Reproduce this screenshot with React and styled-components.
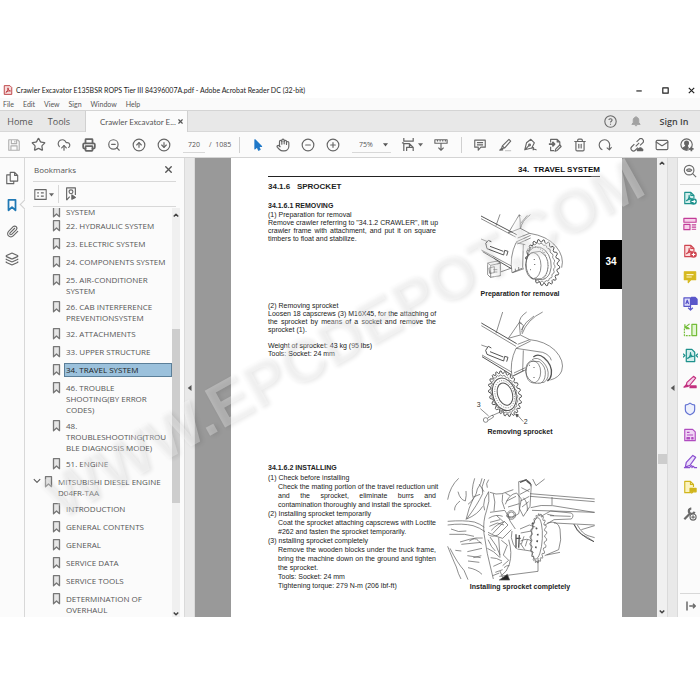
import React from "react";

import styled, { createGlobalStyle, css } from "styled-components";
import {
  Star,
  CloudUpload,
  Printer,
  ZoomOut,
  CircleArrowUp,
  CircleArrowDown,
  CircleMinus,
  CirclePlus,
  Hand,
  Trash2,
  Mail,
  Paperclip,
  Layers,
  Shield,
  X,
} from "lucide-react";

const bookmarks = [
  { lines: ["SYSTEM"] },
  { lines: ["22. HYDRAULIC SYSTEM"] },
  { lines: ["23. ELECTRIC SYSTEM"] },
  { lines: ["24. COMPONENTS SYSTEM"] },
  { lines: ["25. AIR-CONDITIONER", "SYSTEM"] },
  { lines: ["26. CAB INTERFERENCE", "PREVENTIONSYSTEM"] },
  { lines: ["32. ATTACHMENTS"] },
  { lines: ["33. UPPER STRUCTURE"] },
  { lines: ["34. TRAVEL SYSTEM"], active: true },
  { lines: ["46. TROUBLE", "SHOOTING(BY ERROR", "CODES)"] },
  { lines: ["48.", "TROUBLESHOOTING(TROU", "BLE DIAGNOSIS MODE)"] },
  { lines: ["51. ENGINE"] },
  { lines: ["MITSUBISHI DIESEL ENGINE", "D04FR-TAA"], parent: true },
  { lines: ["INTRODUCTION"] },
  { lines: ["GENERAL CONTENTS"] },
  { lines: ["GENERAL"] },
  { lines: ["SERVICE DATA"] },
  { lines: ["SERVICE TOOLS"] },
  { lines: ["DETERMINATION OF", "OVERHAUL"] },
];

const App = () => {
  return (
    <>
      <GlobalStyle />
      <Window>
        <TitleBar>
          <PdfLogo />
          <Title>
            Crawler Excavator E135BSR ROPS Tier III 84396007A.pdf - Adobe
            Acrobat Reader DC (32-bit)
          </Title>
          <WindowButton aria-label="Minimize">
            <Glyph viewBox="0 0 10 10" $size={9}>
              <path d="M1.5 5.5h6" />
            </Glyph>
          </WindowButton>
          <WindowButton aria-label="Maximize">
            <Glyph viewBox="0 0 10 10" $size={9}>
              <path d="M2 2h6v6H2z" />
            </Glyph>
          </WindowButton>
          <WindowButton aria-label="Close">
            <Glyph viewBox="0 0 10 10" $size={9}>
              <path d="M2 2l6 6M8 2L2 8" />
            </Glyph>
          </WindowButton>
        </TitleBar>

        <MenuBar>
          {["File", "Edit", "View", "Sign", "Window", "Help"].map((name) => (
            <MenuButton key={name}>{name}</MenuButton>
          ))}
        </MenuBar>

        <TabBar>
          <NavTab>Home</NavTab>
          <NavTab>Tools</NavTab>
          <FileTab>
            <FileName>Crawler Excavator E...</FileName>
            <CloseTab aria-label="Close tab">
              <X size={7} strokeWidth={4} />
            </CloseTab>
          </FileTab>
          <Account>
            <IconButton aria-label="Help">
              <Glyph viewBox="0 0 16 16" $size={13}>
                <circle cx="8" cy="8" r="7" />
                <path d="M6 6.3C6 3.9 10 3.9 10 6.3 10 7.7 8 7.7 8 9.3M8 10.7v1.3" />
              </Glyph>
            </IconButton>
            <IconButton aria-label="Notifications" $color="#a2a2a2">
              <Glyph viewBox="0 0 16 16" $size={12}>
                <path
                  fill="currentColor"
                  d="M2.5 12.5L4.3 10V6.5C4.3 4.2 6 3 8 3s3.700 1.200 3.700 3.500V10l1.800 2.500zM6.500 14.200h3M8 1.500V3"
                />
              </Glyph>
            </IconButton>
            <SignIn>Sign In</SignIn>
          </Account>
        </TabBar>

        <Toolbar>
          <IconButton aria-label="Save" $color="#b0b0b0">
            <Glyph viewBox="0 0 16 16" $size={14}>
              <path d="M2 2h10l2 2v10H2zM5 2v4.500h6V2M4.500 14V9h7v5M9 3v2" />
            </Glyph>
          </IconButton>
          <IconButton aria-label="Add star">
            <Star size={15} strokeWidth={2} />
          </IconButton>
          <IconButton aria-label="Upload">
            <CloudUpload size={14} strokeWidth={2} />
          </IconButton>
          <IconButton aria-label="Print">
            <Printer size={14} strokeWidth={3} />
          </IconButton>
          <IconButton aria-label="Find">
            <ZoomOut size={14} strokeWidth={2} />
          </IconButton>
          <IconButton aria-label="Previous page">
            <CircleArrowUp size={14} strokeWidth={2} />
          </IconButton>
          <IconButton aria-label="Next page">
            <CircleArrowDown size={14} strokeWidth={2} />
          </IconButton>
          <PageInput aria-label="Page number" defaultValue="720" />
          <PageTotal>/&nbsp;&nbsp;1085</PageTotal>
          <Divider />
          <IconButton aria-label="Select" $color="#1f78c8">
            <Glyph viewBox="0 0 16 16" $size={14}>
              <path
                fill="currentColor"
                d="M4.500 2v10.500l2.600-2.300 1.600 3.800 1.700-.8-1.600-3.500h3.300z"
              />
            </Glyph>
          </IconButton>
          <IconButton aria-label="Pan">
            <Hand size={14} strokeWidth={2} />
          </IconButton>
          <IconButton aria-label="Zoom out">
            <CircleMinus size={14} strokeWidth={2} />
          </IconButton>
          <IconButton aria-label="Zoom in">
            <CirclePlus size={14} strokeWidth={2} />
          </IconButton>
          <ZoomBox>
            <ZoomSelect aria-label="Zoom level" defaultValue="75%">
              <option>75%</option>
              <option>100%</option>
            </ZoomSelect>
            <Caret />
          </ZoomBox>
          <IconButton aria-label="Fit page" $width={32}>
            <Glyph viewBox="0 0 16 16" $size={15}>
              <path d="M3 1v3.500h10V1M3 15V7h6l4 4v4M9 7v4h4M6 15v-4h3M1 6.200h2" />
            </Glyph>
            <Caret />
          </IconButton>
          <IconButton aria-label="Read mode">
            <Glyph viewBox="0 0 16 16" $size={14}>
              <path d="M1 2h14v4H1zM4 2v2M7 2v2M10 2v2M13 2v2M8 6v8M5 11l3 3 3-3" />
            </Glyph>
          </IconButton>
          <Divider />
          <IconButton aria-label="Comment">
            <Glyph viewBox="0 0 16 16" $size={14}>
              <path d="M2 2.500h12v8H9L6 14v-3.500H2zM4.500 5.300h7M4.500 7.800h7" />
            </Glyph>
          </IconButton>
          <IconButton aria-label="Highlight">
            <Glyph viewBox="0 0 16 16" $size={14}>
              <path d="M12.500 1.500l2 2-7 8-3.500.8 1-3.300zM2 14l2-2 1.500 1.500zM5 9l2.500 2.500" />
              <path d="M8 14.500h7" opacity=".35" />
            </Glyph>
          </IconButton>
          <IconButton aria-label="Sign">
            <Glyph viewBox="0 0 16 16" $size={14}>
              <path d="M9 1.500l4 4-3 6-8 2 2-8zM2 13.500l5-5M10 12c2-2 3-1 1.500 1.500 2-1.500 2.500 0 4 0" />
              <circle cx="7.500" cy="8" r="1" />
            </Glyph>
          </IconButton>
          <IconButton aria-label="Edit page">
            <Glyph viewBox="0 0 16 16" $size={14}>
              <path d="M3 5V1.500h7.500l3 3V8M3 10v4.500h4M10.500 1.500v3h3" />
              <path strokeWidth="2" d="M1 7h6M5 4.500L7.500 7 5 9.500" />
              <path d="M9 12.500l-1 2.500 2.500-.8 4.500-4.500-1.500-1.700z" />
            </Glyph>
          </IconButton>
          <IconButton aria-label="Delete">
            <Trash2 size={14} strokeWidth={2} />
          </IconButton>
          <IconButton aria-label="Rotate">
            <Glyph viewBox="0 0 16 16" $size={14}>
              <path d="M5 13.500A6 6 0 1 1 13 10v3M10 11l3 2.500 2.500-3" />
            </Glyph>
          </IconButton>
          <ShareTools>
            <IconButton aria-label="Share link">
              <Glyph viewBox="0 0 16 16" $size={14}>
                <path d="M6.500 9.500l4-4M7.500 4.500l3-3a2.600 2.600 0 0 1 4 4l-3 3M9 11l-3 3a2.600 2.600 0 0 1-4-4l3-3" />
                <path
                  fill="currentColor"
                  d="M8.500 14.500c-1-1.500.5-2.500 1.500-2 .5-2 3.500-1.500 3.500 0 1.500 0 1.500 2 .5 2z"
                />
              </Glyph>
            </IconButton>
            <IconButton aria-label="Send email">
              <Mail size={14} strokeWidth={2} />
            </IconButton>
            <IconButton aria-label="Share">
              <Glyph viewBox="0 0 16 16" $size={14}>
                <circle cx="7.500" cy="7.500" r="6.500" />
                <path
                  fill="currentColor"
                  d="M7.500 3.500c3 0 2.500 3.500 1 5v1l1 2-2 2c-2 0-3.500-1-4-2l3-2v-1c-1.500-1.500-2-5 1-5z"
                />
                <path strokeWidth="2" d="M13 10v5M10.500 12.500h5" />
              </Glyph>
            </IconButton>
          </ShareTools>
        </Toolbar>

        <Body>
          <SideRail>
            <RailButton aria-label="Page thumbnails">
              <Glyph viewBox="0 0 16 16" $size={14}>
                <path d="M6 1.500h5l3.500 3.500v6.500H6zM11 1.500V5h3.500M6 4.500H2v10h8v-3" />
              </Glyph>
            </RailButton>
            <RailButton aria-label="Bookmarks" $active>
              <Glyph viewBox="0 0 16 16" $size={14} $weight={2}>
                <path d="M4 2h8v12l-4-3.500L4 14z" />
              </Glyph>
            </RailButton>
            <RailButton aria-label="Attachments">
              <Paperclip size={13} strokeWidth={2} />
            </RailButton>
            <RailButton aria-label="Layers">
              <Layers size={14} strokeWidth={2} />
            </RailButton>
          </SideRail>

          <Panel>
            <PanelHeader>
              <span>Bookmarks</span>
              <CloseTab aria-label="Close bookmarks">
                <X size={11} strokeWidth={3} />
              </CloseTab>
            </PanelHeader>
            <PanelTools>
              <IconButton aria-label="Options" $width={22}>
                <Glyph viewBox="0 0 16 16" $size={13}>
                  <path d="M1 2h14v12H1zM4 6h2M4 10h2M8.500 6H12M8.500 10H12" />
                </Glyph>
                <Caret />
              </IconButton>
              <ShortDivider />
              <IconButton aria-label="Find bookmark" $width={22}>
                <Glyph viewBox="0 0 16 16" $size={14}>
                  <path d="M3 15V1h10v8M3 15l3.500-4" />
                  <circle cx="8" cy="5.500" r="2.200" />
                  <path fill="currentColor" d="M9 9v5l4-2z" />
                </Glyph>
              </IconButton>
            </PanelTools>
            <ListArea>
              <BookmarkList>
                {bookmarks.map((item) => (
                  <Bookmark key={item.lines.join(" ")} $parent={item.parent}>
                    {item.parent && (
                      <Glyph viewBox="0 0 10 10" $size={8}>
                        <path d="M1 4l4 4 4-4" />
                      </Glyph>
                    )}
                    <BookmarkIcon />
                    <BookmarkLink href="#page" $active={item.active}>
                      {item.lines.map((line) => (
                        <span key={line}>{line}</span>
                      ))}
                    </BookmarkLink>
                  </Bookmark>
                ))}
              </BookmarkList>
              <PanelScroll>
                <Chevron up />
                <PanelThumb />
                <Chevron />
              </PanelScroll>
            </ListArea>
          </Panel>

          <Splitter aria-label="Collapse bookmarks">
            <LeftArrow />
          </Splitter>

          <Canvas>
            <Page id="page">
              <PageContent>
                <RunningHead>34.&nbsp; TRAVEL SYSTEM</RunningHead>
                <Heading>34.1.6 &nbsp; SPROCKET</Heading>

                <Section $height={101}>
                  <div>
                    <SubHeading>34.1.6.1 REMOVING</SubHeading>
                    <Line>(1) Preparation for removal</Line>
                    <Line $justify>
                      Remove crawler referring to "34.1.2 CRAWLER", lift up
                    </Line>
                    <Line $justify>
                      crawler frame with attachment, and put it on square
                    </Line>
                    <Line>timbers to float and stabilize.</Line>
                  </div>
                  <Figure $top={12}>
                    <RemovalDrawing />
                    <figcaption>Preparation for removal</figcaption>
                  </Figure>
                </Section>

                <Section $height={161}>
                  <div>
                    <Line>(2) Removing sprocket</Line>
                    <Line $justify>
                      Loosen 18 capscrews (3) M16X45, for the attaching of
                    </Line>
                    <Line $justify>
                      the sprocket by means of a socket and remove the
                    </Line>
                    <Line>sprocket (1).</Line>
                    <Line>&nbsp;</Line>
                    <Line>Weight of sprocket: 43 kg (95 lbs)</Line>
                    <Line>Tools: Socket: 24 mm</Line>
                  </div>
                  <Figure $top={9}>
                    <SprocketDrawing />
                    <figcaption>Removing sprocket</figcaption>
                  </Figure>
                </Section>

                <Section $height={140}>
                  <Steps>
                    <SubHeading>34.1.6.2 INSTALLING</SubHeading>
                    <Line>(1) Check before installing</Line>
                    <Line $indent $justify>
                      Check the mating portion of the travel reduction unit
                    </Line>
                    <Line $indent $justify>
                      and the sprocket, eliminate burrs and
                    </Line>
                    <Line $indent>
                      contamination thoroughly and install the sprocket.
                    </Line>
                    <Line>(2) Installing sprocket temporarily</Line>
                    <Line $indent $justify>
                      Coat the sprocket attaching capscrews with Loctite
                    </Line>
                    <Line $indent>#262 and fasten the sprocket temporarily.</Line>
                    <Line>(3) nstalling sprocket completely</Line>
                    <Line $indent $justify>
                      Remove the wooden blocks under the truck frame,
                    </Line>
                    <Line $indent $justify>
                      bring the machine down on the ground and tighten
                    </Line>
                    <Line $indent>the sprocket.</Line>
                    <Line $indent>Tools: Socket: 24 mm</Line>
                    <Line $indent>Tightening torque: 279 N-m (206 lbf-ft)</Line>
                  </Steps>
                  <Figure $top={14}>
                    <InstallDrawing />
                    <figcaption>Installing sprocket completely</figcaption>
                  </Figure>
                </Section>
              </PageContent>
              <ChapterTab>34</ChapterTab>
            </Page>
          </Canvas>

          <DocScroll>
            <Chevron up />
            <DocThumb />
            <Chevron />
          </DocScroll>
          <Splitter aria-label="Collapse tools">
            <LeftArrow />
          </Splitter>
          <ToolRail />
        </Body>

        <Watermark aria-hidden="true">
          <span>WWW.EPCDEPOT.COM</span>
        </Watermark>
      </Window>
    </>
  );
};

const PdfLogo = () => (
  <Glyph viewBox="0 0 16 16" $size={10}>
    <path stroke="#b3262a" fill="#f7dcdc" d="M2 1h9l3 3v11H2z" />
    <path
      stroke="#b3262a"
      d="M4.500 12c2-1 3.500-4 3.500-7.500 0 3 1.500 5 4 5-3-.5-5 0-7.500 2.500z"
    />
  </Glyph>
);

const Caret = () => (
  <Glyph viewBox="0 0 8 8" $size={5}>
    <path fill="currentColor" stroke="none" d="M0 2h8L4 7z" />
  </Glyph>
);

const Chevron = ({ up }) => (
  <Glyph viewBox="0 0 8 8" $size={6} $weight={2}>
    <path d={up ? "M1 6l3-3 3 3" : "M1 2l3 3 3-3"} />
  </Glyph>
);

const LeftArrow = () => (
  <Glyph viewBox="0 0 8 8" $size={6}>
    <path fill="currentColor" stroke="none" d="M6 0v8L1 4z" />
  </Glyph>
);

const BookmarkIcon = () => (
  <Glyph viewBox="0 0 12 12" $size={12}>
    <path
      stroke="#777"
      fill="#e6e6e6"
      d="M2.500 .7h6v10L5.500 8 2.500 10.700z"
    />
  </Glyph>
);

const acro = "M4 11c2-.8 3-3.500 3-6 0 2.500 1.500 4 3.500 4-2.500-.3-4.500.2-6.500 2z";
const sheet = "M10 14.500H2v-13h7l3.500 3.500v3M9 1.500V5h3.500";

const ToolRail = () => (
  <Tools>
    <ToolButton aria-label="Search tools" $color="#6b6b6b" $first>
      <Glyph viewBox="0 0 16 16" $size={14}>
        <circle cx="7" cy="7" r="5.500" />
        <path d="M11 11l4 4M4 7c1.500-2 4.500-2 6 0-1.500 2-4.500 2-6 0zM7 6.500v1" />
      </Glyph>
    </ToolButton>
    <ToolGroup>
      <ToolButton aria-label="Export PDF" $color="#1d918c">
        <Glyph viewBox="0 0 16 16" $size={14}>
          <path fill="#d3eeec" d={sheet} />
          <path d={acro} />
          <circle cx="12" cy="12" r="3.800" fill="currentColor" stroke="none" />
          <path stroke="#fff" d="M9.800 12h4M12.300 10.500l1.500 1.500-1.500 1.500" />
        </Glyph>
      </ToolButton>
      <ToolButton aria-label="Organize pages" $color="#c23c98">
        <Glyph viewBox="0 0 16 16" $size={14}>
          <path fill="#f6cfe9" d="M1 1.500h14v4.500H1zM1 8.500h7v6H1z" />
          <path d="M10 9h5M10 11.500h5M10 14h5" />
        </Glyph>
      </ToolButton>
      <ToolButton aria-label="Create PDF" $color="#cf4550">
        <Glyph viewBox="0 0 16 16" $size={14}>
          <path fill="#fbdcdd" d={sheet} />
          <path d={acro} />
          <circle cx="12" cy="12" r="3.800" fill="currentColor" stroke="none" />
          <path stroke="#fff" d="M10 12h4M12 10v4" />
        </Glyph>
      </ToolButton>
      <ToolButton aria-label="Comment" $color="#d6b91f">
        <Glyph viewBox="0 0 16 16" $size={14}>
          <path fill="currentColor" d="M1.500 2h13v9H9l-3 3.500V11H1.500z" />
          <path stroke="#fff6c8" d="M4 5.300h8M4 8h6" />
        </Glyph>
      </ToolButton>
      <ToolButton aria-label="Combine files" $color="#5a57c9">
        <Glyph viewBox="0 0 16 16" $size={15}>
          <path fill="#dddcfa" d="M1 2h7v9H1z" />
          <path fill="currentColor" d="M9 1.500h4l2 2V9H9z" />
          <path d="M3 8.500l1.500-4 1.500 4M8 10v5M5.500 12.500L8 15l2.500-2.500" />
        </Glyph>
      </ToolButton>
      <ToolButton aria-label="Compare" $color="#75bd3b">
        <Glyph viewBox="0 0 16 16" $size={15}>
          <path fill="#e3f6d3" d="M9.500 2.500h5v12h-5z" />
          <path d="M1.500 7v7.500H8" strokeDasharray="2 1" />
          <path d="M7 7H3M7 2L2 6M2 2.500V6h4" />
        </Glyph>
      </ToolButton>
      <ToolButton aria-label="Compress PDF" $color="#1d918c">
        <Glyph viewBox="0 0 16 16" $size={15}>
          <path fill="#d3eeec" d="M3.500 1.500h6l3 3v10h-9z" />
          <path d="M5 11c2-.8 3-3.500 3-6 0 2.500 1 4 3 4-2-.3-4 .2-6 2z" />
          <path d="M0 6l2 2-2 2M16 6l-2 2 2 2" />
        </Glyph>
      </ToolButton>
      <ToolButton aria-label="Redact" $color="#c2307f">
        <Glyph viewBox="0 0 16 16" $size={14}>
          <path fill="#f6cfe9" d="M12 1.500l2.500 2-7 8.500-4 .5 1-4z" />
          <path fill="currentColor" d="M1 14l3-3 2 2zM8 12.500h7v2H8z" />
        </Glyph>
      </ToolButton>
      <ToolButton aria-label="Protect" $color="#6272d2">
        <Shield size={14} strokeWidth={2} fill="#eceffc" />
      </ToolButton>
      <ToolButton aria-label="Prepare form" $color="#b04cc0">
        <Glyph viewBox="0 0 16 16" $size={14}>
          <path fill="#f0d6f5" d="M2 1.500h9l3 3v10H2z" />
          <path d="M4.500 5h3M4.500 8h7M4.500 11v1.500h3V11zM10 11v1.500h1.500V11z" />
        </Glyph>
      </ToolButton>
      <ToolButton aria-label="Fill and sign" $color="#8a4fcf">
        <Glyph viewBox="0 0 16 16" $size={15}>
          <path fill="#ecdffb" d="M10.500 1.500l3 2-6 8.500-5 2 1-5z" />
          <path d="M1 14.500h6c2-3 3-3 2.500 0 1.500-2 2-1.500 2.500 0h3" />
        </Glyph>
      </ToolButton>
      <ToolButton aria-label="Send for comments" $color="#d0b51c">
        <Glyph viewBox="0 0 16 16" $size={14}>
          <path fill="#fbf3bf" d="M9 14.500H2v-13h6.500L12 5v3M8.500 1.500V5H12" />
          <path fill="currentColor" d="M8 9.500h7v4h-3.500L10 15v-1.500H8z" />
        </Glyph>
      </ToolButton>
      <ToolButton aria-label="More tools" $color="#6b6b6b">
        <Glyph viewBox="0 0 16 16" $size={14}>
          <path
            strokeWidth="2.600"
            d="M1.500 14L8 7.500M13 5.500a3.200 3.200 0 1 1-3.500-4"
          />
          <circle cx="11.500" cy="11.500" r="3.500" fill="#fff" />
          <path d="M9.500 11.500h4M11.500 9.500v4" />
        </Glyph>
      </ToolButton>
    </ToolGroup>
    <ToolButton aria-label="Expand" $color="#6b6b6b" $last>
      <Glyph viewBox="0 0 16 16" $size={12} $weight={2}>
        <path d="M4 2v12M7 8h8M12 5l3 3-3 3" />
      </Glyph>
    </ToolButton>
  </Tools>
);

// closed outline of a toothed ring seen at an angle
const toothed = (cx, cy, rx, ry, teeth, depth, tilt) => {
  const t = (tilt * Math.PI) / 180;
  const points = [];
  for (let i = 0; i < teeth * 4; i++) {
    const a = (i / (teeth * 4)) * Math.PI * 2;
    const k = i % 4 < 2 ? 0 : depth;
    const x = (rx - k) * Math.cos(a);
    const y = (ry - k) * Math.sin(a);
    points.push(
      `${(cx + x * Math.cos(t) - y * Math.sin(t)).toFixed(1)} ${(
        cy +
        x * Math.sin(t) +
        y * Math.cos(t)
      ).toFixed(1)}`
    );
  }
  return `M${points.join("L")}Z`;
};

const RemovalDrawing = () => (
  <Drawing viewBox="105 175 270 225" $width={90}>
    <g>
      <path
        strokeWidth="3"
        d="M123 184l107 56M128 291l86 51"
      />
      <path d="M123 192l104 55M180 179l-12 34M205 235l33-55 5 5M238 181c4 16 2 30 3 42M271 180q-27 20-30 43M262 182l-20 24M205 235l36-14 28 15-36 14" />
      <path d="M269 236q52 8 78 38 27 32 18 65M228 262l44-20M232 268l40-18M123 253l20 8M124 286l90 48" />
      <path d="M228 264q-20 42-12 90l34-15M250 268l-2 70M228 264l28 6M218 354l34-12M226 350v-8M236 345v-8" />
      <path
        strokeWidth="3"
        d="M137 266l8-9 9 4M137 266l4 16 50 19 3-14 10 3-4 13M150 275l40 15"
      />
      <path d="M143 325l28-6 10 6v38l-30 5-8-8zM143 325l9 7v36M152 332l28-6M181 352l34-12" />
      <path d="M147 340l16-4v18l-14 2zM160 345h12M160 352h12" strokeWidth="2" />
    </g>
    <path d={toothed(308, 324, 50, 70, 20, 7, -12)} fill="#fff" strokeWidth="3" />
    <path d={toothed(302, 324, 42, 60, 20, 3, -12)} />
    <ellipse cx="297" cy="326" rx="36" ry="50" transform="rotate(-12 297 326)" />
    <path
      strokeWidth="3"
      strokeDasharray="3 5"
      d="M262 284q30-18 52 12 20 42-2 76"
    />
    <path
      fill="#fff"
      d="M274 294l26-4q26 14 24 46-2 28-20 36l-24 1q-22-14-22-46 2-26 16-33z"
    />
    <ellipse cx="280" cy="333" rx="23" ry="39" />
    <path strokeWidth="4" d="M283 314v2M270 345h2M284 328v2" />
  </Drawing>
);

const SprocketDrawing = () => (
  <Drawing viewBox="105 40 270 345" $width={90}>
    <path strokeWidth="3" d="M124 76l106 62M126 177l88 54" />
    <path d="M124 84l104 62M188 43l-20 64M205 122l33-48 6 6M260 43q-24 16-22 36 2 22 3 32M308 43q-46 22-62 66M282 55q-28 18-38 42M205 122l36-10 28 14-36 14" />
    <path d="M240 72l10 12-5 20M269 126q46 4 76 32 30 32 20 62-8 20-34 27M228 152l44-22M124 142l20 7M126 172l90 52" />
    <path d="M228 152q-20 42-12 84l36-18M250 158l-2 62M228 152l80 12q22 8 26 24M218 236l40-20M222 226l34-16" />
    <path
      strokeWidth="3"
      d="M137 158l8-12 9 5M137 158l4 12 50 20 3-14 10 3-4 13M150 162l40 16"
    />
    <path
      strokeWidth="4"
      d="M280 178q14-12 32 2 26 22 22 50-2 14-12 20"
    />
    <path d="M276 186q16-10 32 6 20 20 16 44-2 12-12 18l-18 2" />
    <path
      fill="#fff"
      d="M272 190l26 2q20 14 18 38-2 22-14 26l-16 1q-26-10-29-36 0-24 15-31z"
    />
    <ellipse cx="280" cy="223" rx="22" ry="33" />
    <path strokeWidth="4" d="M282 208v2M268 203h2M282 238v2" />
    <path d={toothed(195, 288, 47, 70, 22, 7, -18)} fill="#fff" strokeWidth="3" />
    <path d={toothed(193, 289, 38, 59, 22, 3, -18)} />
    <g transform="rotate(-18 193 290)">
      <ellipse cx="193" cy="290" rx="34" ry="50" strokeWidth="3" />
      <ellipse cx="194" cy="290" rx="28" ry="42" strokeDasharray="3 4" />
      <ellipse cx="195" cy="290" rx="22" ry="34" strokeWidth="3" />
    </g>
    <path d="M121 333l25 22M156 354l34-15M234 354l16 18" />
    <path strokeWidth="4" d="M228 350l6 2-3 5z" />
    <circle cx="137" cy="367" r="7" />
    <path d="M143 361l14-9 4 6-16 10" />
    <text x="110" y="328">3</text>
    <text x="251" y="380">2</text>
  </Drawing>
);

const InstallDrawing = () => (
  <Drawing viewBox="15 48 450 312" $width={150}>
    <path d="M56 52Q30 76 23 116M104 52Q92 90 100 112 86 140 78 176M54 92q6 24 22 28 4-18 2-30M60 120q-18 14-16 28M84 130q24-18 28-46 12-16 14-32M134 54q-12 24-6 44-16 34-48 76 34-14 48-38M146 56q-10 12-4 24M100 108l20-8M118 70l14 22" />
    <path d="M23 181q48-4 80 2 18 6 30 16M23 192q44-6 76 2 20 6 36 18M33 204q22 12 46 6M28 220h46l28 6M60 243l28-8q20-6 40-4M64 250l60-6M88 240q18-12 26-2l12 12" />
    <path d="M23 256q16 40 26 62 6 22 14 36M30 262q22 44 42 66l12 28M46 268l18 2M82 272l44-10M82 284l40 6M84 300l34 4M100 290l24-6M84 320q26 4 42 20" />
    <path d="M146 92q4 30-6 56-12 32-8 70l10 60 18 76M150 94q18 8 36 4l34-12M188 100q-6 22 6 44M160 98q8 24 2 52M146 92l-12 22q-6 20 0 34" />
    <path d="M150 154l44-6q12 14 16 32l16 24M146 172q22-14 42-6M150 184l30-8M148 196l24-10 20 6M154 208q20-22 40-26l10 10-30 30q-20 8-30-2M158 218l36-38M170 164l20 18M144 214q24 14 44 18l26-26" />
    <path d="M196 130q10-30 34-34l14 18-8 44q-22 16-38 6M200 120l28-14M204 138l34-10M210 104l-14-8M236 62l24-6 14 14-4 66-20 30-12-24zM244 80l24 12M240 100l30-16M242 120l26-14M246 138l20-16M250 110q14 14 12 40M254 58q20 0 18 18M278 54l10 20 26-20" />
    <circle cx="214" cy="162" r="13" />
    <circle cx="214" cy="162" r="9" />
    <path strokeWidth="4" d="M240 64l20-8M260 60l12 10M228 220v40M238 222l-2 38M228 232h14M276 226h22M276 234h22" />
    <path d="M270 98l194 16M270 106l194 16M336 108v24M272 140q30-10 66-6l124 20M276 148l190 6M292 172l40-22 62 6q10 8 0 18l-52 2-30 18M330 164l62 2M322 160l20 4" />
    <path d="M342 186l122 6M402 190q10 24 22 30 20 8 38 22M412 192q14 26 32 32l20 6M424 206l40-12" />
    <path d="M402 190q16 34 60 52" strokeWidth="3" />
    <path d="M322 186q32-10 38 18 6 34-4 62l-42 18M320 282l40-8" />
    <path d={toothed(295, 232, 25, 74, 22, 6, 3)} fill="#fff" strokeWidth="2" />
    <ellipse cx="290" cy="232" rx="17" ry="62" transform="rotate(3 290 232)" />
    <path strokeDasharray="5 14" strokeWidth="5" d="M276 186q22 16 16 50-2 28-14 38" />
    <path d="M240 204l28-12 18 6M242 216l32-6M242 240q20-10 32 0M232 264l40 6M240 246l14 20M252 226l-8 24M262 236l-6 20M216 210q-6 20 4 40l10 14" />
    <path d="M144 236q10 24 22 34M150 228q22 26 30 54M142 262q20 8 36 26M152 290q18 0 34 10M160 316l26-12M166 334l22-8M184 238l18 14-12 30 16 16-18 16M206 236q12 40 2 74-8 24-22 32M158 344l20-8M176 230l4 60M192 320q8-8 16-6" />
    <path d="M178 346l116-15v-40M180 330l8 20" />
    <path fill="#222" d="M178 357l24-17 7 17z" />
  </Drawing>
);

const uiFont = css`
  font-family: "Open Sans", "Noto Sans", sans-serif;
`;

// for the window title, menus and file tab
const narrowFont = css`
  font-family: Lato, "Open Sans", sans-serif;
`;

const GlobalStyle = createGlobalStyle`
  * {
    box-sizing: border-box;
  }

  body {
    margin: 0;
    background: #fff;
    color: #555;
    ${uiFont}
    font-size: 8px;
  }

  button,
  input,
  select {
    font: inherit;
    color: inherit;
    background: none;
    border: 0;
    border-radius: 0;
    padding: 0;
  }
`;

const Window = styled.main`
  position: relative;
  display: flex;
  flex-direction: column;
  height: calc(100vh - 165px);
  margin: 82px 0 83px;
  overflow: hidden;
`;

const Glyph = styled.svg`
  flex: none;
  width: ${(props) => props.$size}px;
  height: ${(props) => props.$size}px;
  fill: none;
  stroke: currentColor;
  stroke-width: ${(props) => props.$weight || 1.3};
  stroke-linejoin: round;
`;

const TitleBar = styled.header`
  display: flex;
  flex: none;
  align-items: center;
  height: 16px;
  padding-left: 3px;
  color: #222;
`;

const Title = styled.h1`
  ${narrowFont}
  flex: 1;
  margin: 0 0 0 3px;
  font-size: 7px;
  font-weight: 400;
  white-space: nowrap;
`;

const WindowButton = styled.button`
  display: flex;
  justify-content: center;
  width: 26px;

  &:last-child {
    width: 22px;
    padding-left: 4px;
  }
`;

const MenuBar = styled.nav`
  ${narrowFont}
  display: flex;
  flex: none;
  gap: 9px;
  height: 12px;
  padding-left: 3px;
  background: #fafafa;
  font-size: 7px;
`;

const MenuButton = styled.button`
  line-height: 12px;
`;

const TabBar = styled.div`
  display: flex;
  flex: none;
  height: 22px;
  background: #e8e8e8;
  border-top: 1px solid #d4d4d4;
  border-bottom: 1px solid #d8d8d8;
  font-size: 9px;
`;

const NavTab = styled.button`
  width: 40px;

  & + & {
    width: 45px;
    padding-right: 7px;
  }
`;

const FileTab = styled.div`
  display: flex;
  align-items: center;
  justify-content: space-between;
  width: 103px;
  height: 21px;
  padding: 0 3px 0 14px;
  background: #fbfbfb;
  border-left: 1px solid #d0d0d0;
  border-right: 1px solid #d0d0d0;
`;

const FileName = styled.span`
  ${narrowFont}
  font-size: 8px;
  white-space: nowrap;
`;

const CloseTab = styled.button`
  display: flex;
`;

const Account = styled.div`
  display: flex;
  align-items: center;
  margin-left: auto;
`;

const SignIn = styled.button`
  width: 52px;
  color: #444;
  font-weight: 600;
`;

const Toolbar = styled.div`
  display: flex;
  flex: none;
  align-items: center;
  height: 26px;
  padding-left: 1px;
  background: #fbfbfb;
  border-bottom: 1px solid #d4d4d4;
  font-size: 7px;
`;

const IconButton = styled.button`
  display: flex;
  flex: none;
  align-items: center;
  justify-content: center;
  gap: 2px;
  width: ${(props) => props.$width || 25}px;
  color: ${(props) => props.$color || "#666"};
`;

const PageInput = styled.input`
  width: 22px;
  height: 16px;
  margin: 0 4px 0 7px;
  border-bottom: 1px solid #d8d8d8;
  text-align: center;
`;

const PageTotal = styled.span`
  width: 22px;
`;

const Divider = styled.span`
  width: 1px;
  height: 16px;
  margin: 0 6px 0 8px;
  background: #d0d0d0;
`;

const ZoomBox = styled.div`
  display: flex;
  align-items: center;
  width: 40px;
  height: 16px;
  margin: 0 5px 0 6px;
  padding-right: 3px;
  border-bottom: 1px solid #d8d8d8;
`;

const ZoomSelect = styled.select`
  flex: 1;
  width: 30px;
  padding-left: 7px;
  appearance: none;
`;

const ShareTools = styled.div`
  display: flex;
  margin-left: 7px;
`;

const Body = styled.div`
  display: flex;
  flex: 1;
  min-height: 0;
`;

const SideRail = styled.nav`
  display: flex;
  flex: none;
  flex-direction: column;
  width: 25px;
  padding-top: 6px;
  background: #fbfbfb;
  border-right: 1px solid #d8d8d8;
`;

const RailButton = styled.button`
  position: relative;
  display: flex;
  align-items: center;
  justify-content: center;
  height: 27px;
  color: ${(props) => (props.$active ? "#2079b5" : "#666")};

  ${(props) =>
    props.$active &&
    css`
      &::after {
        content: "";
        position: absolute;
        right: -4px;
        width: 6px;
        height: 6px;
        background: #fbfbfb;
        border: solid #d0d0d0;
        border-width: 0 0 1px 1px;
        transform: rotate(45deg);
      }
    `}
`;

const Panel = styled.aside`
  display: flex;
  flex: none;
  flex-direction: column;
  width: 159px;
  padding-left: 8px;
  background: #fbfbfb;
`;

const PanelHeader = styled.div`
  display: flex;
  align-items: center;
  justify-content: space-between;
  height: 24px;
  margin-right: 8px;
  padding: 0 2px 0 1px;
  border-bottom: 1px solid #d8d8d8;
`;

const PanelTools = styled.div`
  display: flex;
  align-items: center;
  height: 25px;
  margin-right: 8px;
  border-bottom: 1px solid #d8d8d8;
`;

const ShortDivider = styled.span`
  width: 1px;
  height: 18px;
  margin: 0 1px 0 3px;
  background: #d8d8d8;
`;

const ListArea = styled.div`
  display: flex;
  flex: 1;
  min-height: 0;
  padding-top: 1px;
`;

const BookmarkList = styled.ul`
  display: flex;
  flex: 1;
  flex-direction: column;
  justify-content: flex-end;
  margin: 0;
  padding: 0;
  overflow: hidden;
  list-style: none;
`;

const Bookmark = styled.li`
  display: flex;
  flex: none;
  align-items: flex-start;
  gap: 2px;
  min-height: 18px;
  padding: 1px 1px 3px ${(props) => (props.$parent ? 0 : 18)}px;

  &:first-child {
    min-height: 0;
    padding-bottom: 1px;
  }

  &:last-child {
    padding-bottom: 1px;
  }
`;

const BookmarkLink = styled.a`
  display: flex;
  flex: 1;
  flex-direction: column;
  line-height: 11px;
  padding: 0 0 1px 1px;
  color: ${(props) => (props.$active ? "#222" : "#555")};
  text-decoration: none;
  white-space: nowrap;

  ${(props) =>
    props.$active &&
    css`
      background: #9bc1dc;
      box-shadow: 0 0 0 1px #5b7f99;
    `}
`;

const scrollTrack = css`
  display: flex;
  flex: none;
  flex-direction: column;
  align-items: center;
  justify-content: space-between;
  background: #f0f0f0;
  color: #444;
`;

const PanelScroll = styled.div`
  ${scrollTrack}
  width: 8px;
  margin-right: 4px;
  padding-top: 4px;
`;

const PanelThumb = styled.div`
  width: 8px;
  height: 43%;
  margin-top: 3px;
  background: #cdcdcd;
`;

const DocScroll = styled.div`
  ${scrollTrack}
  width: 10px;
  padding: 2px 0;
`;

const DocThumb = styled.div`
  width: 9px;
  height: 10px;
  margin-top: 143px;
  background: #cdcdcd;
`;

const Splitter = styled.button`
  display: flex;
  flex: none;
  align-items: center;
  justify-content: center;
  width: 11px;
  background: #e9e9e9;
  border: solid #dadada;
  border-width: 0 1px;
`;

const Canvas = styled.section`
  display: flex;
  flex: 1;
  justify-content: center;
  min-width: 0;
  padding: 0 35px 0 36px;
  background: #999;
  overflow: hidden;
`;

const Page = styled.article`
  display: flex;
  flex: 1;
  justify-content: space-between;
  min-width: 0;
  background: #fff;
  color: #222;
  font-family: "Liberation Sans", Arial, sans-serif;
  font-size: 7px;
`;

const PageContent = styled.div`
  flex: 1;
  min-width: 0;
  padding: 6px 0 0 37px;
`;

const RunningHead = styled.div`
  height: 13px;
  border-bottom: 1px solid #222;
  color: #111;
  font-size: 8px;
  font-weight: 700;
  line-height: 12px;
  text-align: right;
`;

const Heading = styled.h2`
  height: 24px;
  margin: 0;
  padding-top: 4px;
  font-size: 8px;
  line-height: 11px;
`;

const SubHeading = styled.h3`
  margin: 0 0 1px;
  font-size: 7px;
  line-height: 9px;
`;

const Section = styled.section`
  display: grid;
  grid-template-columns: minmax(0, 1fr) 160px;
  column-gap: 4px;
  min-height: ${(props) => props.$height}px;
`;

const Line = styled.p`
  margin: 0;
  padding-left: ${(props) => (props.$indent ? 10 : 0)}px;
  line-height: 8px;
  white-space: nowrap;
  text-align-last: ${(props) => (props.$justify ? "justify" : "left")};
`;

const Steps = styled.div`
  ${Line} {
    line-height: 9px;
  }
`;

const Figure = styled.figure`
  display: flex;
  flex-direction: column;
  align-items: center;
  margin: 0;
  padding-top: ${(props) => props.$top}px;

  figcaption {
    margin-top: 2px;
    font-weight: 700;
    line-height: 8px;
    white-space: nowrap;
  }
`;

const Drawing = styled.svg`
  width: ${(props) => props.$width}px;
  fill: none;
  stroke: #555;
  stroke-width: 2;
  stroke-linejoin: round;

  text {
    fill: #333;
    stroke: none;
    font-size: 21px;
  }
`;

const ChapterTab = styled.div`
  width: 22px;
  height: 49px;
  margin-top: 82px;
  background: #000;
  color: #fff;
  font-size: 10px;
  font-weight: 700;
  line-height: 43px;
  text-align: center;
`;

const Tools = styled.nav`
  display: flex;
  flex: none;
  flex-direction: column;
  width: 22px;
  padding-left: 2px;
  background: #fbfbfb;
`;

const ToolGroup = styled.div`
  display: flex;
  flex: 0 0 342px;
  flex-direction: column;
  justify-content: space-around;
`;

const ToolButton = styled.button`
  display: flex;
  align-items: center;
  justify-content: center;
  height: 22px;
  color: ${(props) => props.$color};

  ${(props) =>
    props.$first &&
    css`
      flex: none;
      height: 27px;
      border-bottom: 1px solid #d8d8d8;
    `}

  ${(props) =>
    props.$last &&
    css`
      height: 24px;
      margin-top: auto;
      border-top: 1px solid #d8d8d8;
    `}
`;

const Watermark = styled.div`
  position: absolute;
  inset: 0 14px 24px 0;
  display: flex;
  align-items: center;
  justify-content: center;
  pointer-events: none;
  color: rgba(255, 255, 255, 0.3);
  font-family: "Liberation Sans", Arial, sans-serif;
  font-size: 61px;
  font-weight: 700;
  text-shadow: 2px 2px 4px rgba(0, 0, 0, 0.09);
  white-space: nowrap;

  span {
    transform: rotate(-29deg);
  }
`;

export default App;
